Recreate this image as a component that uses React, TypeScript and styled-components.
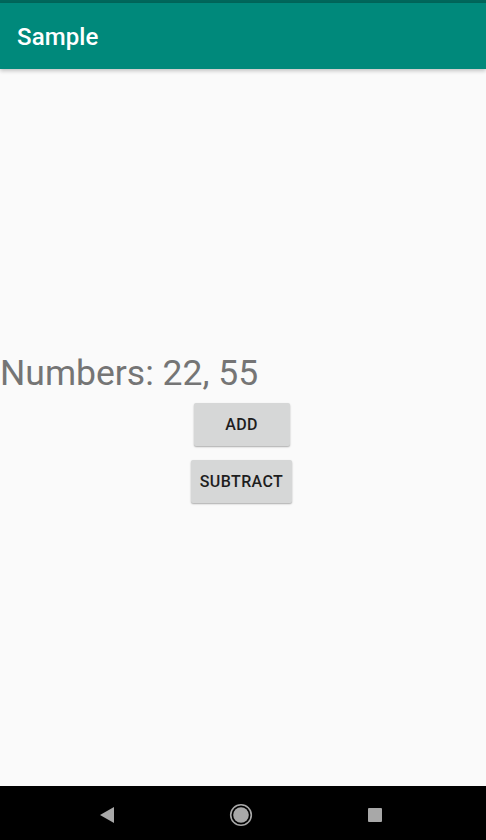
import React from 'react';
import styled, { createGlobalStyle } from 'styled-components';

const GlobalStyle = createGlobalStyle`
    html, body {
        margin: 0;
        padding: 0;
        background: #fafafa;
    }
    body {
        font-family: Roboto, "Noto Sans", sans-serif;
    }
`;

const Screen = styled.div`
    width: 486px;
    height: 840px;
    display: flex;
    flex-direction: column;
    background: #fafafa;
    overflow: hidden;
`;

const StatusBar = styled.div`
    height: 3px;
    background: #00675b;
    flex-shrink: 0;
`;

const AppBar = styled.header`
    height: 66px;
    flex-shrink: 0;
    background: #00897b;
    display: flex;
    align-items: center;
    padding: 2px 17px 0;
    box-sizing: border-box;
    box-shadow: 0 2px 4px rgba(0, 0, 0, 0.22);
    position: relative;
    z-index: 1;
`;

const Title = styled.h1`
    margin: 0;
    color: #ffffff;
    font-family: Roboto, sans-serif;
    font-weight: 500;
    font-size: 24px;
    letter-spacing: 0.1px;
`;

const Content = styled.main`
    flex: 1;
    display: flex;
    flex-direction: column;
    justify-content: center;
`;

const Numbers = styled.div`
    font-family: Roboto, sans-serif;
    font-size: 35.5px;
    line-height: 41px;
    color: #757575;
    margin-bottom: 9px;
    white-space: nowrap;
`;

const Buttons = styled.div`
    display: flex;
    flex-direction: column;
    align-items: center;
    gap: 14px;
    padding-right: 3px;
`;

const Button = styled.button<{ $minWidth?: number }>`
    height: 43px;
    min-width: ${(p) => p.$minWidth ?? 0}px;
    padding: 0 9px;
    border: none;
    border-radius: 2px;
    background: #d6d7d7;
    color: #1e1e1e;
    font-family: Roboto, sans-serif;
    font-weight: 500;
    font-size: 16px;
    letter-spacing: 0.4px;
    text-transform: uppercase;
    box-shadow: 0 1px 2px rgba(0, 0, 0, 0.25), 0 1px 1px rgba(0, 0, 0, 0.08);
    cursor: pointer;
`;

const NavBar = styled.nav`
    height: 54px;
    flex-shrink: 0;
    box-sizing: border-box;
    background: #000000;
    display: flex;
    align-items: center;
    justify-content: space-between;
    padding: 4px 96px 0 92px;
`;

const NavIcon = styled.div`
    width: 30px;
    height: 30px;
    display: flex;
    align-items: center;
    justify-content: center;
`;

export default function App() {
    return (
        <>
            <GlobalStyle />
            <Screen>
                <StatusBar />
                <AppBar>
                    <Title>Sample</Title>
                </AppBar>
                <Content>
                    <Numbers>Numbers: 22, 55</Numbers>
                    <Buttons>
                        <Button $minWidth={96}>Add</Button>
                        <Button>Subtract</Button>
                    </Buttons>
                </Content>
                <NavBar>
                    <NavIcon>
                        <svg width="16" height="18" viewBox="0 0 16 18">
                            <path d="M15 1 L1 9 L15 17 Z" fill="#a8a8a8" />
                        </svg>
                    </NavIcon>
                    <NavIcon>
                        <svg width="24" height="24" viewBox="0 0 24 24">
                            <circle cx="12" cy="12" r="10.3" fill="none" stroke="#a8a8a8" strokeWidth="1.6" />
                            <circle cx="12" cy="12" r="7.8" fill="#a8a8a8" />
                        </svg>
                    </NavIcon>
                    <NavIcon>
                        <svg width="16" height="16" viewBox="0 0 16 16">
                            <rect x="1" y="1" width="14" height="14" rx="1" fill="#a8a8a8" />
                        </svg>
                    </NavIcon>
                </NavBar>
            </Screen>
        </>
    );
}
